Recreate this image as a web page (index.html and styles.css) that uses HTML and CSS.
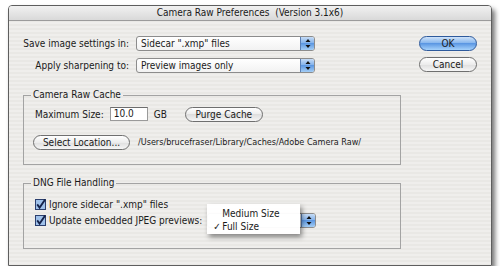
FILE: index.html
```html
<!DOCTYPE html>
<html lang="en">

<head>
  <meta charset="UTF-8" />
  <title>Camera Raw Preferences</title>
  <link rel="stylesheet" href="styles.css">
</head>

<body>
  <div class="window">
    <div class="titlebar">Camera Raw Preferences&nbsp; (Version 3.1x6)</div>

    <div class="content">
      <div class="top">
        <div class="settings">
          <label>Save image settings in:</label>
          <div class="popup popup-wide">
            <span class="popup-text">Sidecar ".xmp" files</span>
            <span class="popup-arrows">
              <svg width="8" height="11" viewBox="0 0 8 11"><path d="M4 1 L6.5 4 H1.5 Z M4 10 L6.5 7 H1.5 Z" fill="#111"/></svg>
            </span>
          </div>

          <label>Apply sharpening to:</label>
          <div class="popup popup-wide">
            <span class="popup-text">Preview images only</span>
            <span class="popup-arrows">
              <svg width="8" height="11" viewBox="0 0 8 11"><path d="M4 1 L6.5 4 H1.5 Z M4 10 L6.5 7 H1.5 Z" fill="#111"/></svg>
            </span>
          </div>
        </div>

        <div class="actions">
          <button class="btn btn-default">OK</button>
          <button class="btn">Cancel</button>
        </div>
      </div>

      <fieldset class="group cache">
        <legend>Camera Raw Cache</legend>
        <div class="row">
          <span>Maximum Size:</span>
          <span class="field">10.0</span>
          <span class="unit">GB</span>
          <button class="btn btn-purge">Purge Cache</button>
        </div>
        <div class="row row-location">
          <button class="btn btn-location">Select Location...</button>
          <span class="path">/Users/brucefraser/Library/Caches/Adobe Camera Raw/</span>
        </div>
      </fieldset>

      <fieldset class="group dng">
        <legend>DNG File Handling</legend>
        <div class="check-row">
          <svg class="checkbox" width="11" height="11" viewBox="0 0 11 11">
            <rect x="0.5" y="0.5" width="10" height="10" fill="#9fc1ea" stroke="#2b3f6e"/>
            <path d="M2.2 5.4 L4.6 8.6 L10.2 0.4" fill="none" stroke="#14224a" stroke-width="1.8"/>
          </svg>
          <span>Ignore sidecar ".xmp" files</span>
        </div>
        <div class="check-row">
          <svg class="checkbox" width="11" height="11" viewBox="0 0 11 11">
            <rect x="0.5" y="0.5" width="10" height="10" fill="#9fc1ea" stroke="#2b3f6e"/>
            <path d="M2.2 5.4 L4.6 8.6 L10.2 0.4" fill="none" stroke="#14224a" stroke-width="1.8"/>
          </svg>
          <span>Update embedded JPEG previews:</span>
          <div class="popup popup-small">
            <!-- menu is open, so the current value is shown in the menu only -->
            <span class="popup-text"></span>
            <span class="popup-arrows">
              <svg width="8" height="11" viewBox="0 0 8 11"><path d="M4 1 L6.5 4 H1.5 Z M4 10 L6.5 7 H1.5 Z" fill="#111"/></svg>
            </span>
            <ul class="menu">
              <li>Medium Size</li>
              <li class="selected">Full Size</li>
            </ul>
          </div>
        </div>
      </fieldset>
    </div>
  </div>
</body>

</html>
```

FILE: styles.css
```css
body {
  margin: 0;
  background-color: #ffffff;
  font-family: "DejaVu Sans Condensed", "DejaVu Sans", sans-serif;
  font-size: 10px;
  color: #1a1a1a;
}

.window {
  box-sizing: border-box;
  width: 484px;
  height: 261px;
  margin: 5px 0 0 8px;
  border: 1px solid #5e5e5e;
  border-radius: 4px 4px 0 0;
  background: repeating-linear-gradient(#efeeec 0 2px, #e9e8e5 2px 4px);
  box-shadow: 3px 4px 5px rgba(0, 0, 0, 0.55);
}

.titlebar {
  box-sizing: border-box;
  height: 15px;
  line-height: 14px;
  text-align: center;
  border-bottom: 1px solid #9b9b9b;
  border-radius: 3px 3px 0 0;
  background: linear-gradient(#f1f1f1, #d9d9d9);
}

.content {
  padding: 15px 14px 0 14px;
}

.top {
  display: flex;
}

.settings {
  display: grid;
  grid-template-columns: 106px 179px;
  column-gap: 7px;
  row-gap: 7px;
  align-items: center;
}

.settings label {
  text-align: right;
}

.actions {
  display: flex;
  flex-direction: column;
  gap: 6px;
  margin-left: auto;
}

.popup {
  position: relative;
  box-sizing: border-box;
  display: flex;
  height: 15px;
  border: 1px solid #8c8c8c;
  border-radius: 3px;
  background: linear-gradient(#ffffff, #f2f2f2);
}

.popup-text {
  flex: 1;
  padding-left: 4px;
  line-height: 13px;
  white-space: nowrap;
}

.popup-arrows {
  display: flex;
  align-items: center;
  justify-content: center;
  width: 13px;
  border-left: 1px solid #5a7fb5;
  border-radius: 0 2px 2px 0;
  background: linear-gradient(#c6dcf6, #7eafea 50%, #5d98e2 50%, #a3cdf5);
}

.btn {
  box-sizing: border-box;
  height: 15px;
  padding: 0;
  font-family: inherit;
  font-size: 10px;
  color: #1a1a1a;
  border: 1px solid #6f6f6f;
  border-radius: 8px;
  background: linear-gradient(#ffffff, #ececec 50%, #dedede 50%, #f6f6f6);
}

.actions .btn {
  width: 58px;
}

.btn-default {
  border-color: #2e5a9c;
  background: linear-gradient(#cfe3fa, #80b2ec 50%, #5b97e3 50%, #a6d2fb);
}

.group {
  box-sizing: border-box;
  width: 378px;
  margin: 0;
  border: 1px solid #a3a3a3;
  padding: 0 0 0 11px;
}

.group legend {
  margin-left: -4px;
  padding: 0 2px;
  line-height: 12px;
}

.cache {
  margin-top: 16px;
  padding-top: 6px;
  padding-bottom: 15px;
}

.row {
  display: flex;
  align-items: center;
  height: 14px;
}

.field {
  box-sizing: border-box;
  width: 38px;
  height: 14px;
  margin-left: 6px;
  padding-left: 3px;
  line-height: 12px;
  background-color: #ffffff;
  border: 1px solid #9a9a9a;
  border-top-color: #6d6d6d;
}

.unit {
  margin-left: 6px;
}

.btn-purge {
  width: 78px;
  margin-left: 18px;
}

.row-location {
  margin-top: 14px;
}

.btn-location {
  width: 97px;
  margin-left: -2px;
}

.path {
  margin-left: 8px;
  font-size: 9px;
}

.dng {
  margin-top: 12px;
  padding-top: 8px;
  padding-bottom: 19px;
}

.check-row {
  display: flex;
  align-items: center;
  height: 15px;
  margin-bottom: 1px;
}

.checkbox {
  margin-right: 3px;
}

.popup-small {
  width: 109px;
  margin-left: 5px;
}

.menu {
  position: absolute;
  left: -1px;
  top: -10px;
  width: 93px;
  margin: 0;
  padding: 3px 0 1px 0;
  list-style: none;
  background-color: rgba(255, 255, 255, 0.96);
  box-shadow: 2px 3px 5px rgba(0, 0, 0, 0.45);
}

.menu li {
  height: 13px;
  line-height: 13px;
  padding-left: 15px;
  white-space: nowrap;
}

.menu li.selected {
  position: relative;
}

.menu li.selected::before {
  content: "\2713";
  position: absolute;
  left: 6px;
}
```
